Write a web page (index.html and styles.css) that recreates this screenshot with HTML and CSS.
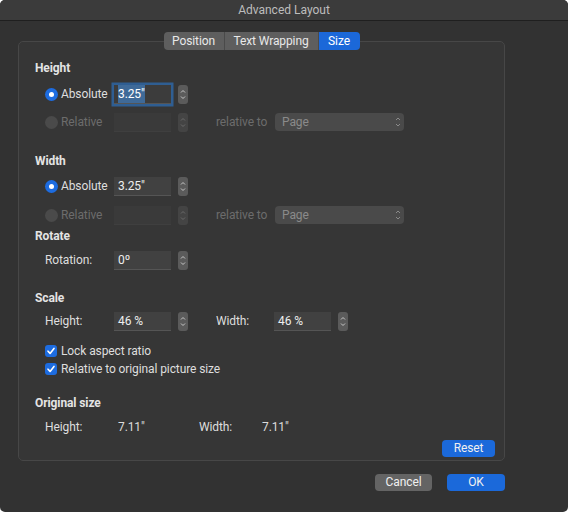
FILE: index.html
```html
<!DOCTYPE html>
<html lang="en">
<head>
  <meta charset="UTF-8" />
  <title>Advanced Layout</title>
  <link rel="stylesheet" href="styles.css">
</head>
<body>
  <div class="window">
    <div class="titlebar">Advanced Layout</div>

    <div class="tabs">
      <span class="tab t-pos">Position</span>
      <span class="tab t-wrap">Text Wrapping</span>
      <span class="tab t-size active">Size</span>
    </div>

    <div class="panel">
      <div class="heading h-height">Height</div>
      <div class="row r-abs1">
        <span class="opt"><span class="radio on"></span>Absolute</span>
        <span class="field focus"><span class="sel">3.25"</span></span>
        <span class="stepper"><svg viewBox="0 0 10 19"><path d="M3 7.5 L5 5.5 L7 7.5 M3 11.5 L5 13.5 L7 11.5"/></svg></span>
      </div>
      <div class="row r-rel1 off">
        <span class="opt"><span class="radio"></span>Relative</span>
        <span class="field"></span>
        <span class="stepper"><svg viewBox="0 0 10 19"><path d="M3 7.5 L5 5.5 L7 7.5 M3 11.5 L5 13.5 L7 11.5"/></svg></span>
        <span class="lbl2">relative to</span>
        <span class="select">Page<svg viewBox="0 0 8 14"><path d="M2 5 L4 3 L6 5 M2 9 L4 11 L6 9"/></svg></span>
      </div>

      <div class="heading h-width">Width</div>
      <div class="row r-abs2">
        <span class="opt"><span class="radio on"></span>Absolute</span>
        <span class="field">3.25"</span>
        <span class="stepper"><svg viewBox="0 0 10 19"><path d="M3 7.5 L5 5.5 L7 7.5 M3 11.5 L5 13.5 L7 11.5"/></svg></span>
      </div>
      <div class="row r-rel2 off">
        <span class="opt"><span class="radio"></span>Relative</span>
        <span class="field"></span>
        <span class="stepper"><svg viewBox="0 0 10 19"><path d="M3 7.5 L5 5.5 L7 7.5 M3 11.5 L5 13.5 L7 11.5"/></svg></span>
        <span class="lbl2">relative to</span>
        <span class="select">Page<svg viewBox="0 0 8 14"><path d="M2 5 L4 3 L6 5 M2 9 L4 11 L6 9"/></svg></span>
      </div>

      <div class="heading h-rotate">Rotate</div>
      <div class="row r-rot">
        <span class="opt">Rotation:</span>
        <span class="field">0º</span>
        <span class="stepper"><svg viewBox="0 0 10 19"><path d="M3 7.5 L5 5.5 L7 7.5 M3 11.5 L5 13.5 L7 11.5"/></svg></span>
      </div>

      <div class="heading h-scale">Scale</div>
      <div class="row r-scale">
        <span class="opt">Height:</span>
        <span class="field">46 %</span>
        <span class="stepper"><svg viewBox="0 0 10 19"><path d="M3 7.5 L5 5.5 L7 7.5 M3 11.5 L5 13.5 L7 11.5"/></svg></span>
        <span class="lbl2">Width:</span>
        <span class="field">46 %</span>
        <span class="stepper"><svg viewBox="0 0 10 19"><path d="M3 7.5 L5 5.5 L7 7.5 M3 11.5 L5 13.5 L7 11.5"/></svg></span>
      </div>
      <div class="check c-lock"><span class="box"><svg viewBox="0 0 12 12"><path d="M3 6.2 L5.1 8.4 L9 3.4"/></svg></span>Lock aspect ratio</div>
      <div class="check c-rel"><span class="box"><svg viewBox="0 0 12 12"><path d="M3 6.2 L5.1 8.4 L9 3.4"/></svg></span>Relative to original picture size</div>

      <div class="heading h-orig">Original size</div>
      <div class="row r-orig">
        <span class="opt">Height:</span>
        <span class="val">7.11"</span>
        <span class="lbl2">Width:</span>
        <span class="val">7.11"</span>
      </div>
      <div class="reset-row"><span class="btn blue reset">Reset</span></div>
    </div>

    <div class="actions">
      <span class="btn gray">Cancel</span>
      <span class="btn blue ok">OK</span>
    </div>
  </div>
</body>
</html>
```

FILE: styles.css
```css
* { box-sizing: border-box; margin: 0; padding: 0; }
html, body { background: #fff; }
body {
  font-family: Roboto, "Noto Sans", sans-serif;
  font-size: 12px;
  letter-spacing: -0.1px;
  color: #dcdcdc;
}
.window {
  width: 568px; height: 512px;
  background: #323232;
  border-radius: 5px;
  overflow: hidden;
}
.titlebar {
  height: 21px; line-height: 20px;
  background: #3b3b3b; border-bottom: 1px solid #1f1f1f;
  text-align: center; color: #bdbdbd; letter-spacing: 0;
}

/* tabs sit over the panel's top border */
.tabs {
  display: flex; justify-content: center;
  margin: 11px 0 0 18px; width: 487px;
  height: 18px; position: relative; z-index: 2;
}
.tab {
  flex-shrink: 0; white-space: nowrap; text-align: center;
  height: 18px; line-height: 18px;
  background: #5e5e5e; color: #e8e8e8;
  border-right: 1px solid #4a4a4a;
}
.t-pos { width: 61px; border-radius: 4px 0 0 4px; }
.t-wrap { width: 94px; }
.t-size { width: 41px; }
.tab.active { background: #1b68d9; color: #fff; border: none; border-radius: 0 4px 4px 0; }

.panel {
  margin: -9px 0 0 18px; width: 487px; height: 420px;
  background: #363636; border: 1px solid #474747; border-radius: 5px;
  padding: 18px 9px 0 16px;
}
.heading { font-weight: 700; color: #e4e4e4; height: 16px; line-height: 16px; }
.row {
  display: flex; align-items: center;
  height: 20px; padding-left: 10px;
}
.row > * { flex-shrink: 0; }
.opt { display: flex; align-items: center; width: 69px; color: #dedede; white-space: nowrap; }
.radio {
  width: 13px; height: 13px; border-radius: 50%;
  background: #4a4a4a; margin-right: 3px; position: relative;
}
.radio.on { background: #1d6ce0; }
.radio.on::after {
  content: ""; position: absolute; left: 4px; top: 4px;
  width: 5px; height: 5px; border-radius: 50%; background: #fff;
}
.field {
  width: 57px; height: 19px; line-height: 19px; padding-left: 4px;
  background: #414141; border-bottom: 1px solid #555;
  color: #eee;
}
.field.focus { box-shadow: 0 0 0 2.5px #2f5e92; background: #3c3c3c; }
.sel { background: #3f6a98; color: #fff; padding: 2px 0; }
.stepper {
  width: 10px; height: 19px; margin-left: 7px;
  background: #5b5b5b; border-radius: 3px; display: flex;
}
.stepper svg { width: 100%; height: 100%; }
.stepper path, .select path { fill: none; stroke: #c8c8c8; stroke-width: 1; }
.lbl2 { width: 59px; margin-left: 28px; color: #dedede; white-space: nowrap; }
.select {
  display: flex; align-items: center; justify-content: space-between;
  width: 129px; height: 18px; padding: 0 2px 0 7px;
  background: #4a4a4a; border-radius: 4px; color: #8a8a8a;
}
.select svg { width: 8px; height: 14px; }

.off .opt, .off .lbl2 { color: #6c6c6c; }
.off .field { background: #3a3a3a; border-bottom-color: #3f3f3f; }
.off .stepper { background: #444; }
.off .stepper path { stroke: #6a6a6a; }
.off .select path { stroke: #8a8a8a; }

.check { display: flex; align-items: center; height: 16px; padding-left: 10px; color: #dedede; }
.box {
  width: 12px; height: 12px; border-radius: 3px;
  background: #1d6ce0; margin-right: 4px; display: flex;
}
.box svg { width: 100%; height: 100%; }
.box path { fill: none; stroke: #fff; stroke-width: 1.6; stroke-linecap: round; stroke-linejoin: round; }

.val { width: 57px; padding-left: 4px; }
.r-scale .lbl2 + .field { margin-left: -1px; }

/* vertical rhythm */
.r-abs1 { margin-top: 8px; }
.r-rel1 { margin-top: 8px; }
.h-width { margin-top: 21px; }
.r-abs2 { margin-top: 7px; }
.r-rel2 { margin-top: 9px; }
.h-rotate { margin-top: 3px; }
.r-rot { margin-top: 6px; }
.h-scale { margin-top: 20px; }
.r-scale { margin-top: 5px; }
.c-lock { margin-top: 12px; }
.c-rel { margin-top: 2px; }
.h-orig { margin-top: 18px; }
.r-orig { margin-top: 6px; }
.reset-row { display: flex; justify-content: flex-end; margin-top: 3px; }

.btn {
  display: inline-block; height: 17px; line-height: 17px;
  text-align: center; border-radius: 4px; color: #f0f0f0;
}
.blue { background: #1b69da; }
.gray { background: #646464; }
.reset { width: 53px; }
.actions {
  display: flex; justify-content: flex-end; gap: 15px;
  margin-top: 13px; padding-right: 63px;
}
.actions .gray { width: 57px; }
.actions .ok { width: 58px; }
```
